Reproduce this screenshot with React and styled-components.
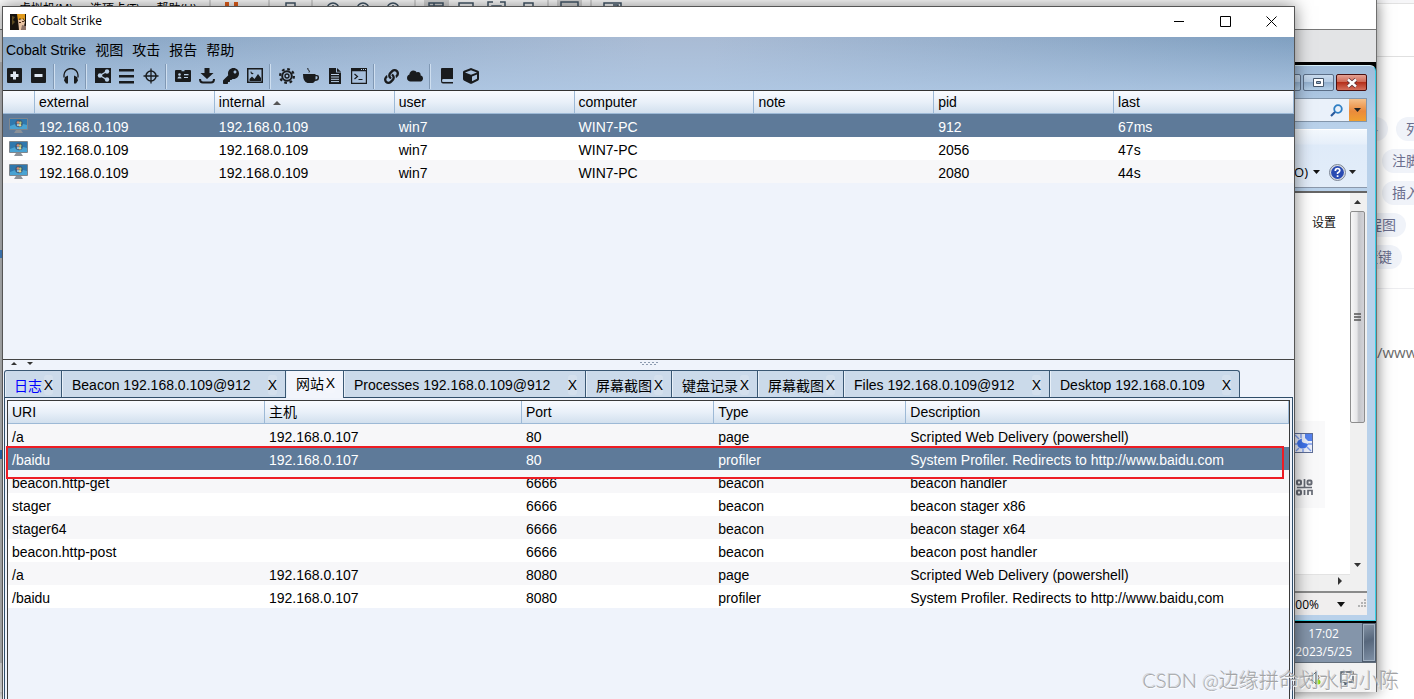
import React from "react";
import styled, { createGlobalStyle, css } from "styled-components";
import { FaKey, FaLink, FaCloud, FaCube } from "react-icons/fa";

const ui = `"Liberation Sans", "Noto Sans CJK SC", sans-serif`;
const sys = `"Open Sans", "Noto Sans CJK SC", sans-serif`;
const zh = `"Noto Sans CJK SC", sans-serif`;

const GlobalStyle = createGlobalStyle`
  *, *::before, *::after { box-sizing: border-box; }
  body { margin: 0; font-family: ${ui}; font-size: 14px; color: #000; }
  button, input { font: inherit; color: inherit; margin: 0; padding: 0; border: 0; background: none; }
  svg { display: block; flex: none; }
`;

const Desktop = styled.main`
  position: relative;
  min-height: 100vh;
  overflow: hidden;
  background: #fff;
`;

/* ---------- web page at the far right ---------- */

const BlogPage = styled.section`
  position: absolute;
  top: 0;
  right: -62px;
  width: 200px;
  bottom: 0;
  font-family: ${zh};
  color: #6b6f8e;
`;
const BlogTop = styled.div`
  height: 4px;
  background: #f6f6f8;
  border-bottom: 1px solid #e2e2e2;
`;
const BlogHeader = styled.div`
  height: 53px;
  border-bottom: 1px solid #e0e0e0;
`;
const Pills = styled.div`
  display: grid;
  gap: 8px;
  padding: 60px 0 19px;
  border-bottom: 1px solid #ededf0;
`;
const PillRow = styled.div`
  display: flex;
  gap: 8px;
  padding-left: ${(p) => p.$indent}px;
`;
const Pill = styled.span`
  height: 24px;
  padding: 0 10px;
  border-radius: 12px;
  background: #f0f3f9;
  line-height: 22px;
  white-space: nowrap;
`;
const BlogText = styled.p`
  margin: 52px 0 0 101px;
  font-family: ${sys};
  font-size: 15px;
  line-height: 22px;
  color: #6a6a6a;
`;

/* ---------- virtual machine window ---------- */

const HostWindow = styled.section`
  position: absolute;
  top: 0;
  left: 0;
  right: 37px;
  border-right: 1px solid #6f6f6f;
  box-shadow: 0 0 14px rgba(0, 0, 0, 0.55);
  background: linear-gradient(
    #c4c6c9 250px,
    #4b8fd8 250px,
    #4b8fd8 258px,
    #c9cbcd 258px,
    #c9cbcd 450px,
    #2f77c6 450px,
    #2f77c6 459px,
    #c9cbcd 459px
  );
`;
const HostBar = styled.div`
  display: flex;
  height: 30px;
  padding-left: 19px;
  border-bottom: 1px solid #777;
  background: #fff;
  overflow: hidden;
`;
const HostMenus = styled.div`
  display: flex;
  gap: 17px;
  margin-right: 12px;
  font-family: ${sys};
  font-size: 12px;
  line-height: 18px;
  white-space: nowrap;
`;
const HostStrip = styled.div`
  height: 32px;
  background: #e3e4e6;
`;
const Screen = styled.div`
  margin-left: 3px;
  padding-top: 3px;
  background: #000;
`;
const Browser = styled.div`
  padding: 0 8px 5px;
  border: 1px solid #35cfe6;
  border-top-color: #d7f0fa;
  border-radius: 0 6px 0 0;
  background: linear-gradient(#9fbbd9, #b9d1ea 60px, #b9d1ea);
`;
const Caption = styled.div`
  display: flex;
  justify-content: flex-end;
  gap: 2px;
  padding: 8px 0 7px;
`;
const CaptionButton = styled.button`
  display: grid;
  place-items: center;
  width: 31px;
  height: 17px;
  border: 1px solid ${(p) => (p.$close ? "#4b1010" : "#5c6f88")};
  border-radius: 2px;
  background: ${(p) =>
    p.$close
      ? "linear-gradient(#e5a193, #cf6a57 45%, #b5301c 50%, #d4705c)"
      : "linear-gradient(#c9dbee, #b4cbe4 45%, #93b0cf 50%, #b4cfe8)"};
`;
const SearchRow = styled.div`
  display: flex;
  justify-content: flex-end;
  align-items: center;
  height: 24px;
  border: 1px solid #8396ab;
  background: #eaf1fa;
`;
const SearchInput = styled.input`
  flex: 1;
  min-width: 0;
`;
const SearchDrop = styled.button`
  display: grid;
  place-items: center;
  align-self: stretch;
  width: 17px;
  margin-left: 6px;
  background: linear-gradient(#f5c08a, #ea8a3c 55%, #f0a030);
`;
const CommandBar = styled.div`
  display: flex;
  justify-content: flex-end;
  align-items: flex-end;
  gap: 5px;
  height: 59px;
  margin-top: 7px;
  padding: 0 11px 5px 0;
  border-top: 1px solid #fff;
  border-bottom: 1px solid #8b98ab;
  background: linear-gradient(#f3f8fd, #e6effa 14px, #dfebf9 15px, #e3edf9);
  font-family: ${sys};
  font-size: 13px;
  line-height: 20px;
`;
const CommandItem = styled.button`
  display: flex;
  align-items: center;
  gap: 5px;
  margin-right: 4px;
  height: 20px;
`;
const HelpItem = styled.button`
  display: flex;
  align-items: center;
  gap: 3px;
  height: 20px;
`;
const View = styled.div`
  display: grid;
  grid-template-columns: 1fr 17px;
  grid-template-rows: 381px 17px;
  margin-top: 3px;
  border-top: 2px solid #666;
  border-bottom: 2px solid #8a8a8a;
  background: #fff;
`;
const ViewContent = styled.div`
  display: flex;
  flex-direction: column;
  align-items: flex-end;
  justify-content: space-between;
  padding: 20px 0 66px;
`;
const SettingsLink = styled.a`
  margin-right: 14px;
  font-family: ${zh};
  font-size: 12px;
  line-height: 18px;
  color: #111;
  text-decoration: none;
`;
const SideCard = styled.div`
  display: grid;
  justify-items: end;
  align-content: start;
  gap: 26px;
  width: 60px;
  height: 87px;
  margin-right: 25px;
  padding: 12px 12px 0 0;
  background: #f9f9fa;
`;
const VScroll = styled.div`
  display: flex;
  flex-direction: column;
  align-items: center;
  padding-right: 2px;
  background: #f0f0f0;
`;
const VThumb = styled.div`
  display: grid;
  place-items: center;
  width: 15px;
  height: 212px;
  border: 1px solid #8d8d8d;
  border-radius: 2px;
  background: linear-gradient(90deg, #f7f7f7, #e6e6e8 45%, #c3c4c8 60%, #d3d3d8);
`;
const ScrollArrow = styled.span`
  display: grid;
  place-items: center;
  height: 18px;
`;
const ScrollTrack = styled.div`
  flex: 1;
`;
const HScroll = styled.div`
  display: flex;
  justify-content: flex-end;
  align-items: center;
  padding: 0 8px 4px 0;
  border-top: 1px solid #e3e3e3;
  background: #f0f0f0;
`;
const Corner = styled.div`
  background: #f0f0f0;
`;
const BrowserStatus = styled.div`
  display: flex;
  justify-content: flex-end;
  align-items: center;
  height: 22px;
  background: #f0eeee;
  font-family: ${sys};
  font-size: 12px;
`;
const Zoom = styled.button`
  display: flex;
  align-items: center;
  gap: 18px;
  margin-right: 12px;
`;
const Taskbar = styled.div`
  display: flex;
  justify-content: flex-end;
  height: 40px;
  margin-top: 2px;
  border-bottom: 1px solid #5f6b78;
  background: #8495aa;
  color: #fff;
  font-family: ${sys};
  font-size: 12px;
  line-height: 18px;
  text-align: center;
`;
const Clock = styled.time`
  padding: 2px 10px 0 0;
`;
const ShowDesktop = styled.button`
  width: 14px;
  border: 1px solid #4e5c6e;
  box-shadow: inset 0 0 0 1px #a0afc0;
  background: linear-gradient(160deg, #8796a8, #57677c 45%, #7f90a5);
`;
const HostStatus = styled.div`
  display: flex;
  justify-content: flex-end;
  align-items: center;
  gap: 18px;
  height: 29px;
  padding-right: 22px;
  background: #f2f2f2;
`;

/* ---------- Cobalt Strike window ---------- */

const AppWindow = styled.section`
  position: absolute;
  top: 6px;
  left: 2px;
  right: 119px;
  bottom: 0;
  display: flex;
  flex-direction: column;
  border: 1px solid #555;
  border-bottom: 0;
  background: #eff3fb;
  box-shadow: 0 0 16px rgba(0, 0, 0, 0.5);
`;
const TitleBar = styled.header`
  display: flex;
  align-items: center;
  height: 30px;
  padding-left: 7px;
  background: #fff;
  font-family: ${sys};
  font-size: 12px;
`;
const Title = styled.h1`
  flex: 1;
  margin: 0 0 0 5px;
  font: inherit;
  line-height: 16px;
  padding-bottom: 2px;
`;
const WindowButton = styled.button`
  display: grid;
  place-items: center;
  width: 46px;
  height: 28px;
  margin-bottom: 2px;
`;
const Chrome = styled.div`
  background: linear-gradient(rgba(178, 203, 231, 0), rgba(178, 203, 231, 0.75)),
    linear-gradient(95deg, #84a3c3, #a9bbd4 50%, #a9bbd4 55%, #7f9fc0);
`;
const MenuBar = styled.nav`
  display: flex;
  gap: 9px;
  height: 26px;
  padding-left: 3px;
`;
const MenuItem = styled.button`
  line-height: 26px;
`;
const Toolbar = styled.div`
  display: flex;
  align-items: center;
  height: 27px;
  padding-bottom: 1px;
`;
const ToolButton = styled.button`
  display: grid;
  place-items: center;
  width: 24px;
  height: 24px;
  color: #191b1d;
`;
const ToolSeparator = styled.span`
  width: 8px;
  height: 25px;
  background: linear-gradient(90deg, transparent 2px, #8098b4 2px, #8098b4 3px, #cfdff0 3px, #cfdff0 4px, transparent 4px);
`;
const UpperPane = styled.div`
  flex: 269 1 0;
  min-height: 0;
  overflow: hidden;
  border-top: 1px solid #333;
  border-bottom: 1px solid #444;
`;
const LowerPane = styled.div`
  flex: 340 1 0;
  min-height: 0;
  display: flex;
  flex-direction: column;
`;
const SplitBar = styled.div`
  display: grid;
  grid-template-columns: 1fr auto 1fr;
  align-items: start;
  height: 10px;
  padding: 2px 8px 0;
`;
const Arrows = styled.div`
  display: flex;
  gap: 10px;
`;
const TabList = styled.div`
  display: flex;
  height: 27px;
  padding-left: 1px;
`;
const Tab = styled.div`
  display: flex;
  align-items: center;
  justify-content: space-between;
  width: ${(p) => p.$width}px;
  padding: 1px 8px 0 10px;
  border: 1px solid #3a5874;
  border-width: 1px 1px 0 0;
  box-shadow: inset 1px 0 0 #e8f0f8;
  background: #cbdaea;
  white-space: nowrap;
  &:first-child { border-left-width: 1px; border-radius: 3px 0 0 0; padding-left: 9px; }
  &:last-child { border-radius: 0 3px 0 0; }
  ${(p) =>
    p.$active &&
    css`
      height: 28px;
      padding-bottom: 4px;
      background: #f2f5fc;
      position: relative;
    `}
`;
const TabName = styled.button`
  color: ${(p) => (p.$fresh ? "#0000ff" : "#000")};
  white-space: nowrap;
`;
const TabClose = styled.button`
  padding: 2px 0;
  border-radius: 3px;
  background: rgba(255, 255, 255, 0.18);
`;
const TabPanel = styled.div`
  flex: 1;
  min-height: 0;
  margin: 0 1px;
  padding: 2px 2px 0;
  border: 1px solid #2f4d69;
  border-bottom: 0;
`;
const TableFrame = styled.div`
  position: relative;
  height: 100%;
  border: 1px solid #3a3a3a;
  border-bottom: 0;
`;
const RowMarker = styled.div`
  position: absolute;
  top: 45px;
  left: -2px;
  right: 5px;
  height: 33px;
  border: 2px solid #ed1c24;
  background: linear-gradient(transparent 22px, #f7f7f9 22px);
  pointer-events: none;
`;
const Table = styled.table`
  width: 100%;
  table-layout: fixed;
  border-collapse: separate;
  border-spacing: 0;
`;
const HeadCell = styled.th`
  height: 23px;
  padding: 0 4px;
  border-right: 1px solid #9db9d6;
  border-bottom: 1px solid #9db9d6;
  background: linear-gradient(#f9fbff, #e9f0f9 50%, #d2e0ee);
  font-weight: 400;
  text-align: left;
  line-height: 22px;
  white-space: nowrap;
`;
const HeadLabel = styled.span`
  display: flex;
  align-items: center;
  gap: 8px;
  padding-top: 1px;
  line-height: 21px;
`;
const Row = styled.tr`
  background: ${(p) => (p.$selected ? "#5e7a99" : p.$shaded ? "#f7f7f9" : "#fff")};
  color: ${(p) => (p.$selected ? "#fff" : "#000")};
`;
const Cell = styled.td`
  height: 23px;
  padding: ${(p) => (p.$icon ? "0 0 0 6px" : "3px 4px 0")};
  line-height: 20px;
  white-space: nowrap;
`;

const Watermark = styled.p`
  position: absolute;
  right: 15px;
  bottom: 4px;
  margin: 0;
  font-family: Lato, ${zh};
  font-size: 20px;
  font-weight: 300;
  line-height: 30px;
  color: #a3a4a6;
  text-shadow: 1px 1px 0 rgba(255, 255, 255, 0.8), -1px -1px 0 rgba(110, 110, 110, 0.25);
`;

/* ---------- drawings ---------- */

const Tri = ({ down, right, w = 7, h = 4, color = "#333" }) => (
  <svg width={w} height={h} viewBox="0 0 8 4" preserveAspectRatio="none" fill={color}>
    <path d={right ? "M0 0L8 2L0 4z" : down ? "M0 0h8L4 4z" : "M0 4h8L4 0z"} />
  </svg>
);

const Ink = ({ children, line }) => (
  <svg
    width="16"
    height="16"
    viewBox="0 0 16 16"
    fill={line ? "none" : "currentColor"}
    stroke={line ? "currentColor" : "none"}
    strokeWidth="1.5"
  >
    {children}
  </svg>
);

const pale = "#b9cfe6";

const icons = {
  plus: (
    <Ink>
      <rect x="0" y="0" width="15" height="15" rx="1" />
      <path d="M6 3.500h3V6h2.500v3H9v2.500H6V9H3.500V6H6z" fill="#dfe8f2" />
    </Ink>
  ),
  minus: (
    <Ink>
      <rect x="0" y="0" width="15" height="15" rx="1" />
      <path d="M3.500 6h8v3h-8z" fill="#dfe8f2" />
    </Ink>
  ),
  headphones: (
    <Ink>
      <path d="M1 9.500V7a7 6.500 0 0 1 14 0v2.500" fill="none" stroke="currentColor" strokeWidth="1.300" />
      <path d="M2 9l3-1.500v8H3L1 12.500zM14 9l-3-1.500v8h2l2-3z" />
    </Ink>
  ),
  share: (
    <Ink>
      <rect width="16" height="15" />
      <path d="M11.500 3.500L5 7.500l6.500 4" fill="none" stroke={pale} strokeWidth="1.300" />
      <circle cx="12" cy="3.500" r="2.200" fill={pale} />
      <circle cx="5" cy="7.500" r="2.200" fill={pale} />
      <circle cx="12" cy="11.500" r="2.200" fill={pale} />
    </Ink>
  ),
  bars: (
    <Ink>
      <path d="M0 1h15v2.500H0zM0 7h15v2.500H0zM0 13h15v2.500H0z" />
    </Ink>
  ),
  target: (
    <Ink line>
      <circle cx="8" cy="8" r="5" strokeWidth="1.500" />
      <path d="M8 0.500v15M0.500 8h15" strokeWidth="1.300" />
    </Ink>
  ),
  card: (
    <Ink>
      <path d="M1 2h5.500v1.200h3V2H15q1 0 1 1v10q0 1-1 1H1q-1 0-1-1V3q0-1 1-1z" />
      <circle cx="4.500" cy="6.500" r="1.300" fill={pale} />
      <path d="M2.500 10.500q0-2 2-2t2 2zM9 6h4.500v1.200H9zM9 9h4v1H9z" fill={pale} />
    </Ink>
  ),
  download: (
    <Ink>
      <path d="M5.500 0h5v5h4L8 11 1.500 5h4z" />
      <path d="M1 11q0 3.500 3 3.500h8q3 0 3-3.500" fill="none" stroke="currentColor" strokeWidth="2" />
    </Ink>
  ),
  key: <FaKey size={16} />,
  image: (
    <Ink>
      <path d="M0 0h16v15H0zM1.500 1.500v12h13v-12z" fillRule="evenodd" />
      <path d="M2.500 13v-2L5 8.500l2.500 2.500L11 6l3 4v3zM4 3q.5 2.500 2.500 2Q6 7 4.500 6 3 5 4 3z" />
    </Ink>
  ),
  gear: (
    <Ink line>
      <circle cx="8" cy="8" r="6.900" strokeWidth="2.200" strokeDasharray="2.710 2.710" />
      <circle cx="8" cy="8" r="4.800" strokeWidth="2" />
      <circle cx="8" cy="8" r="2" strokeWidth="1.400" />
    </Ink>
  ),
  coffee: (
    <Ink>
      <path d="M0 6h12.500v1H14a2 2 0 0 1 2 2v1q0 3-4 3-1 2-2.500 2h-5Q0 14 0 6zM12.500 8.300v3.200q2-.2 2-1.500V9q0-.7-.7-.7z" fillRule="evenodd" />
      <path d="M5 0q-1 1 0.500 2T6 4.500" fill="none" stroke="currentColor" strokeWidth="1" />
    </Ink>
  ),
  file: (
    <Ink>
      <path d="M2 0h7v4.500h5V16H2zM10 0l4 3.700h-4z" />
      <path d="M4 6.500h8M4 9h8M4 11.300h8M4 13.600h8" stroke={pale} strokeWidth="1" />
    </Ink>
  ),
  terminal: (
    <Ink>
      <path d="M0 0h16v16H0zM1.200 3.200v11.600h13.600V3.200z" fillRule="evenodd" />
      <path d="M3.500 6l3 2.500-3 2.500M7.500 11.500h4" fill="none" stroke="currentColor" strokeWidth="1.200" />
      <path d="M10 1.500h1M12 1.500h1M14 1.500h1" stroke={pale} strokeWidth="1" />
    </Ink>
  ),
  link: <FaLink size={15} />,
  cloud: <FaCloud size={16} />,
  book: (
    <Ink>
      <path d="M3 0H14v11H4q-1 0-1 1.500t1 1.500H14v1.500H4Q2 15.500 2 13V1q0-1 1-1z" />
      <path d="M4.500 11.800H14v1.200H4.500z" fill={pale} />
    </Ink>
  ),
  cube: <FaCube size={16} />,
};

const AppLogo = () => (
  <svg width="16" height="16" viewBox="0 0 16 16">
    <rect width="16" height="16" fill="#17120d" />
    <path d="M2 2l3 1-2 3 2 2-3 3z" fill="#5b4a20" />
    <path d="M7 0h8v7l-2-3-1 3-2-3-2 3z" fill="#e09a1c" />
    <path d="M8 6l5-1 2 3-1 4-3 4H9z" fill="#e8c3a2" />
    <path d="M9 8h2v1H9zM12 7h2v1h-2z" fill="#4a2a16" />
    <path d="M12 11l4 1v4h-5z" fill="#8e7468" />
  </svg>
);

const Monitor = () => (
  <svg width="19" height="16" viewBox="0 0 19 16">
    <rect width="19" height="12" rx="1" fill="#7e868e" />
    <rect x="1" y="1" width="17" height="10" fill="#2f78ad" />
    <path d="M1 8q8-4 17-1v4H1z" fill="#49a3d3" />
    <circle cx="10" cy="5.500" r="3.800" fill="#3d5d7c" />
    <circle cx="9" cy="4.500" r="1.300" fill="#dd8c6c" />
    <circle cx="11.300" cy="4.800" r="1.200" fill="#b5cc78" />
    <circle cx="9" cy="7" r="1.200" fill="#8fc0e4" />
    <circle cx="11" cy="7.200" r="1.200" fill="#ecd98a" />
    <path d="M7 12h5l2 3H5z" fill="#8b9198" />
  </svg>
);

const HostIcons = () => (
  <svg width="420" height="16" viewBox="0 0 420 16" fill="none" stroke="#44586a" strokeWidth="1.500">
    <path d="M1 0v16M60 0v16M103 0v16M206 0v16M339 0v16M382 0v16" stroke="#b9b9b9" strokeWidth="1" />
    <path d="M16 2h4v10h-4zM25 2h4v10h-4z" fill="#e8611c" stroke="none" />
    <path d="M215 0h25v16h-25zM348 0h25v16h-25z" fill="#dadada" stroke="none" />
    <path d="M77 12V3h9v9M220 14V3h14v11M225 3v11M220 6h14M250 14V3h14v11M279 8V2h5M296 8V2h-5M283 12V6h9v6M315 14V3h9v6M352 14V2h17v12M395 14V3h17v11M404 5h5v6" />
    <circle cx="124" cy="9" r="6" />
    <circle cx="154" cy="9" r="6" />
    <circle cx="184" cy="9" r="6" />
    <path d="M124 5v4M154 5v4M184 5v4" />
  </svg>
);

/* ---------- data ---------- */

const toolGroups = [
  [["plus", "New connection"], ["minus", "Disconnect"]],
  [["headphones", "Listeners"]],
  [["share", "Pivot graph"], ["bars", "Session table"], ["target", "Target table"]],
  [["card", "Credentials"], ["download", "Downloads"], ["key", "Keystrokes"], ["image", "Screenshots"]],
  [["gear", "Payload"], ["coffee", "Java attack"], ["file", "Office macro"], ["terminal", "Web delivery"]],
  [["link", "Host file"], ["cloud", "Manage web server"]],
  [["book", "Help"], ["cube", "About"]],
];

const sessions = [
  ["912", "67ms"],
  ["2056", "47s"],
  ["2080", "44s"],
];

const tabs = [
  { name: "日志", width: 58, fresh: true },
  { name: "Beacon 192.168.0.109@912", width: 224 },
  { name: "网站", width: 58, active: true },
  { name: "Processes 192.168.0.109@912", width: 242 },
  { name: "屏幕截图", width: 86 },
  { name: "键盘记录", width: 86 },
  { name: "屏幕截图", width: 86 },
  { name: "Files 192.168.0.109@912", width: 206 },
  { name: "Desktop 192.168.0.109", width: 190 },
];

const sites = [
  ["/a", "192.168.0.107", "80", "page", "Scripted Web Delivery (powershell)"],
  ["/baidu", "192.168.0.107", "80", "profiler", "System Profiler. Redirects to http://www.baidu.com"],
  ["beacon.http-get", "", "6666", "beacon", "beacon handler"],
  ["stager", "", "6666", "beacon", "beacon stager x86"],
  ["stager64", "", "6666", "beacon", "beacon stager x64"],
  ["beacon.http-post", "", "6666", "beacon", "beacon post handler"],
  ["/a", "192.168.0.107", "8080", "page", "Scripted Web Delivery (powershell)"],
  ["/baidu", "192.168.0.107", "8080", "profiler", "System Profiler. Redirects to http://www.baidu,com"],
];

/* ---------- sections ---------- */

function Blog() {
  return (
    <BlogPage>
      <BlogTop />
      <BlogHeader />
      <Pills>
        <PillRow $indent={64}><Pill>表格</Pill><Pill>列表</Pill></PillRow>
        <PillRow $indent={106}><Pill>注脚</Pill></PillRow>
        <PillRow $indent={106}><Pill>插入</Pill></PillRow>
        <PillRow $indent={68}><Pill>流程图</Pill></PillRow>
        <PillRow $indent={64}><Pill>快捷键</Pill></PillRow>
      </Pills>
      <BlogText>/www.baidu</BlogText>
    </BlogPage>
  );
}

function Host() {
  return (
    <HostWindow>
      <HostBar>
        <HostMenus>
          <span>虚拟机(M)</span>
          <span>选项卡(T)</span>
          <span>帮助(H)</span>
        </HostMenus>
        <HostIcons />
      </HostBar>
      <HostStrip />
      <Screen>
        <Browser>
          <Caption>
            <CaptionButton aria-label="Minimize" />
            <CaptionButton aria-label="Restore">
              <svg width="11" height="9" viewBox="0 0 11 9">
                <path d="M.5.500h10v8H.5zM3.500 3.500v2h4v-2z" fill="#fff" stroke="#45566b" fillRule="evenodd" />
              </svg>
            </CaptionButton>
            <CaptionButton $close aria-label="Close">
              <svg width="12" height="10" viewBox="0 0 12 10">
                <path d="M2 1.500l8 7M10 1.500l-8 7" stroke="#5a3038" strokeWidth="4" />
                <path d="M2 1.500l8 7M10 1.500l-8 7" stroke="#fff" strokeWidth="2.400" />
              </svg>
            </CaptionButton>
          </Caption>
          <SearchRow>
            <SearchInput aria-label="Search" />
            <svg width="13" height="13" viewBox="0 0 13 13" fill="none">
              <circle cx="8" cy="5" r="3.800" stroke="#2f7fc4" strokeWidth="1.800" />
              <path d="M5 8l-4 4" stroke="#27589c" strokeWidth="2.200" />
            </svg>
            <SearchDrop aria-label="Search options"><Tri down color="#222" /></SearchDrop>
          </SearchRow>
          <CommandBar>
            <CommandItem>工具(O) <Tri down color="#111" /></CommandItem>
            <HelpItem aria-label="Help">
              <svg width="17" height="17" viewBox="0 0 17 17">
                <circle cx="8.500" cy="8.500" r="8" fill="#d9dde4" stroke="#7b8494" />
                <circle cx="8.500" cy="8.500" r="6.400" fill="#2a4bb2" />
                <path d="M6.300 7q0-2.500 2.300-2.500T10.800 6.600Q10.800 8 8.600 9v1M8.600 11.300v1.700" fill="none" stroke="#fff" strokeWidth="1.700" />
              </svg>
              <Tri down color="#222" />
            </HelpItem>
          </CommandBar>
          <View>
            <ViewContent>
              <SettingsLink href="#settings">设置</SettingsLink>
              <SideCard>
                <svg width="20" height="20" viewBox="0 0 20 20">
                  <rect x=".5" y=".5" width="19" height="19" fill="#eef2fd" stroke="#5f6f98" />
                  <path d="M12 1h7v7h-4l-3-3z" fill="#5583f0" />
                  <path d="M9 5.500q-1 4 2 4.500t4 1q-1 4.500-5.500 4.500T4 10.500Q4 7 9 5.500z" fill="#3f74ee" />
                  <path d="M2 2l4 4M1 11h3M3 18l3-3M10 16v3M14 14l4 4M15 11h4M8 1v4" stroke="#7f9ff0" strokeWidth="1.400" />
                </svg>
                <svg width="18" height="17" viewBox="0 0 18 17" fill="none" stroke="#666a74" strokeWidth="2">
                  <rect x="2" y="1.500" width="4" height="4" rx="1" />
                  <rect x="12.500" y="1.500" width="4" height="4" rx="1" />
                  <rect x="2" y="11.500" width="4" height="4" rx="1" />
                  <path d="M9.500 0v8M2 8.500h15M9.500 11v5M13 16v-4.500h4V16" strokeWidth="1.700" />
                </svg>
              </SideCard>
            </ViewContent>
            <VScroll>
              <ScrollArrow><Tri /></ScrollArrow>
              <VThumb>
                <svg width="7" height="9" viewBox="0 0 7 9" stroke="#555">
                  <path d="M0 1h7M0 4h7M0 7h7" strokeWidth="1.500" />
                </svg>
              </VThumb>
              <ScrollTrack />
              <ScrollArrow><Tri down /></ScrollArrow>
            </VScroll>
            <HScroll><Tri right w={4} h={8} /></HScroll>
            <Corner />
          </View>
          <BrowserStatus>
            <Zoom>100% <Tri down w={8} h={5} color="#111" /></Zoom>
            <svg width="10" height="10" viewBox="0 0 10 10" fill="#b3b3b3">
              <path d="M7 0h2v2H7zM4 3h2v2H4zM7 3h2v2H7zM1 6h2v2H1zM4 6h2v2H4zM7 6h2v2H7z" />
            </svg>
          </BrowserStatus>
        </Browser>
        <Taskbar>
          <Clock>17:02<br />2023/5/25</Clock>
          <ShowDesktop aria-label="Show desktop" />
        </Taskbar>
      </Screen>
      <HostStatus>
        <svg width="14" height="14" viewBox="0 0 14 14" fill="none" stroke="#53606c">
          <path d="M3 4V1h8v3M1 4h12v6H1zM3 8h8v5H3z" />
        </svg>
        <svg width="14" height="14" viewBox="0 0 14 14" fill="none" stroke="#53606c">
          <path d="M1 5h3l4-4v12L4 9H1zM10 4q2 3 0 5" />
          <circle cx="10" cy="11" r="2.500" fill="#7fd320" stroke="none" />
        </svg>
        <svg width="14" height="14" viewBox="0 0 14 14" fill="none" stroke="#53606c" strokeWidth="1.400">
          <path d="M1 1h12v10H8l-3 3v-3H1z" />
        </svg>
      </HostStatus>
    </HostWindow>
  );
}

function SessionTable() {
  return (
    <Table>
      <colgroup>
        <col width="32" />
        <col span={7} />
      </colgroup>
      <thead>
        <tr>
          <HeadCell aria-label="icon" />
          {["external", "internal", "user", "computer", "note", "pid", "last"].map((h) => (
            <HeadCell key={h}>
              <HeadLabel>{h}{h === "internal" && <Tri w={8} color="#555" />}</HeadLabel>
            </HeadCell>
          ))}
        </tr>
      </thead>
      <tbody>
        {sessions.map(([pid, last], i) => (
          <Row key={pid} $selected={i === 0} $shaded={i % 2 === 0}>
            <Cell $icon><Monitor /></Cell>
            <Cell>192.168.0.109</Cell>
            <Cell>192.168.0.109</Cell>
            <Cell>win7</Cell>
            <Cell>WIN7-PC</Cell>
            <Cell />
            <Cell>{pid}</Cell>
            <Cell>{last}</Cell>
          </Row>
        ))}
      </tbody>
    </Table>
  );
}

function SiteTable() {
  return (
    <Table>
      <colgroup>
        <col width="257" />
        <col width="257" />
        <col width="15%" />
        <col width="15%" />
        <col />
      </colgroup>
      <thead>
        <tr>
          {["URI", "主机", "Port", "Type", "Description"].map((h) => (
            <HeadCell key={h}>{h}</HeadCell>
          ))}
        </tr>
      </thead>
      <tbody>
        {sites.map((site, i) => (
          <Row key={i} $selected={i === 1} $shaded={i % 2 === 0}>
            {site.map((value, c) => (
              <Cell key={c}>{value}</Cell>
            ))}
          </Row>
        ))}
      </tbody>
    </Table>
  );
}

export default function App() {
  return (
    <Desktop>
      <GlobalStyle />
      <Blog />
      <Host />
      <AppWindow>
        <TitleBar>
          <AppLogo />
          <Title>Cobalt Strike</Title>
          <WindowButton aria-label="Minimize">
            <svg width="10" height="10" viewBox="0 0 10 10" stroke="#000"><path d="M0 5.500h10" /></svg>
          </WindowButton>
          <WindowButton aria-label="Maximize">
            <svg width="11" height="11" viewBox="0 0 11 11" stroke="#000" fill="none"><path d="M.5.500h10v10h-10z" /></svg>
          </WindowButton>
          <WindowButton aria-label="Close">
            <svg width="11" height="11" viewBox="0 0 11 11" stroke="#000"><path d="M.5.500l10 10M10.500.500l-10 10" /></svg>
          </WindowButton>
        </TitleBar>
        <Chrome>
          <MenuBar>
            {["Cobalt Strike", "视图", "攻击", "报告", "帮助"].map((m) => (
              <MenuItem key={m}>{m}</MenuItem>
            ))}
          </MenuBar>
          <Toolbar>
            {toolGroups.map((group, g) => (
              <React.Fragment key={g}>
                {g > 0 && <ToolSeparator />}
                {group.map(([icon, label]) => (
                  <ToolButton key={icon} aria-label={label}>{icons[icon]}</ToolButton>
                ))}
              </React.Fragment>
            ))}
          </Toolbar>
        </Chrome>
        <UpperPane>
          <SessionTable />
        </UpperPane>
        <LowerPane>
          <SplitBar>
            <Arrows><Tri w={6} h={3} /><Tri down w={6} h={3} /></Arrows>
            <svg width="18" height="4" viewBox="0 0 18 4" fill="#8c9bb0">
              <path d="M0 0h2v1H0zM4 0h2v1H4zM8 0h2v1H8zM12 0h2v1h-2zM16 0h2v1h-2zM2 2h2v1H2zM6 2h2v1H6zM10 2h2v1h-2zM14 2h2v1h-2z" />
            </svg>
          </SplitBar>
          <TabList>
            {tabs.map((t, i) => (
              <Tab key={i} $width={t.width} $active={t.active}>
                <TabName $fresh={t.fresh}>{t.name}</TabName>
                <TabClose aria-label={`Close ${t.name}`}>X</TabClose>
              </Tab>
            ))}
          </TabList>
          <TabPanel>
            <TableFrame>
              <SiteTable />
              <RowMarker />
            </TableFrame>
          </TabPanel>
        </LowerPane>
      </AppWindow>
      <Watermark>CSDN @边缘拼命划水的小陈</Watermark>
    </Desktop>
  );
}
